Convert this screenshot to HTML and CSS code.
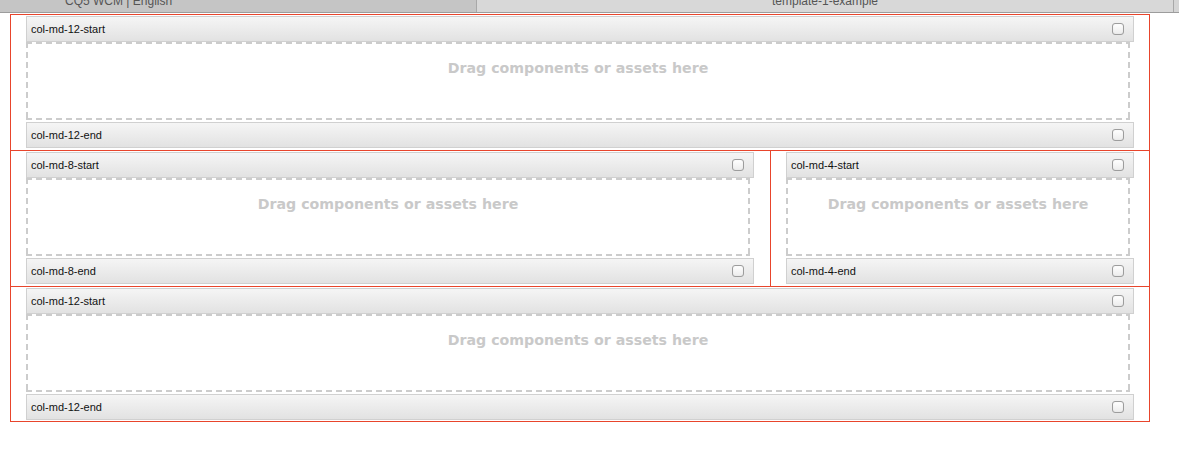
FILE: index.html
```html
<!DOCTYPE html>
<html>
<head>
<meta charset="utf-8">
<link rel="stylesheet" href="styles.css">
</head>
<body>
<div class="topbar">
  <div class="tab tab-left"><div class="tab-text">CQ5 WCM | English</div></div>
  <div class="tab tab-right"><div class="tab-text">template-1-example</div></div>
</div>
<div class="page">
  <div class="row">
    <div class="col col-full">
      <div class="bar"><span class="label">col-md-12-start</span><span class="check"></span></div>
      <div class="drop">Drag components or assets here</div>
      <div class="bar bar-end"><span class="label">col-md-12-end</span><span class="check"></span></div>
    </div>
  </div>
  <div class="row row-split">
    <div class="col col-8">
      <div class="bar"><span class="label">col-md-8-start</span><span class="check"></span></div>
      <div class="drop">Drag components or assets here</div>
      <div class="bar bar-end"><span class="label">col-md-8-end</span><span class="check"></span></div>
    </div>
    <div class="col col-4">
      <div class="bar"><span class="label">col-md-4-start</span><span class="check"></span></div>
      <div class="drop">Drag components or assets here</div>
      <div class="bar bar-end"><span class="label">col-md-4-end</span><span class="check"></span></div>
    </div>
  </div>
  <div class="row row-last">
    <div class="col col-full">
      <div class="bar"><span class="label">col-md-12-start</span><span class="check"></span></div>
      <div class="drop">Drag components or assets here</div>
      <div class="bar bar-end"><span class="label">col-md-12-end</span><span class="check"></span></div>
    </div>
  </div>
</div>
</body>
</html>
```

FILE: styles.css
```css
* { box-sizing: border-box; }

html, body {
  margin: 0;
  padding: 0;
  background: #ffffff;
}

body {
  font-family: "Liberation Sans", Arial, sans-serif;
}

.topbar {
  display: flex;
  height: 13px;
  background: #d5d5d5;
  border-bottom: 1px solid #9c9c9c;
  overflow: hidden;
}

.tab {
  height: 12px;
  overflow: hidden;
  font-size: 12px;
  color: #555555;
}

.tab-text {
  margin-top: -6px;
  line-height: 14px;
  white-space: nowrap;
}

.tab-left {
  width: 477px;
  background: #c5c5c5;
  border-right: 1px solid #a8a8a8;
  padding-left: 65px;
}

.tab-right {
  width: 697px;
  background: #d8d8d8;
  border-right: 1px solid #a8a8a8;
  text-align: center;
}

.page {
  margin: 1px 0 0 10px;
  width: 1140px;
  border: 1px solid #e8452c;
}

.row {
  display: flex;
  padding: 1px 0 2px;
}

.row + .row {
  border-top: 1px solid #e8452c;
}

.row-last {
  padding-bottom: 1px;
}

.col {
  display: flex;
  flex-direction: column;
}

.col-full {
  flex: 1;
  padding: 0 15px;
}

.col-8 {
  width: 760px;
  padding: 0 16px 0 15px;
  border-right: 1px solid #e8452c;
  margin-top: -1px;
  margin-bottom: -2px;
  padding-top: 1px;
  padding-bottom: 2px;
}

.col-4 {
  flex: 1;
  padding: 0 15px;
}

.bar {
  display: flex;
  align-items: center;
  justify-content: space-between;
  height: 26px;
  padding: 0 9px 0 4px;
  background: linear-gradient(to bottom, #f5f5f5 0%, #e2e2e2 100%);
  border: 1px solid #d0d0d0;
}

.bar-end {
  margin-top: 2px;
}

.label {
  font-size: 11px;
  color: #111111;
  line-height: 14px;
}

.check {
  width: 12px;
  height: 12px;
  border: 1px solid #9d9d9d;
  border-radius: 3px;
  background: linear-gradient(to bottom, #ffffff 0%, #ececec 100%);
  box-shadow: inset 0 0 1px rgba(0, 0, 0, 0.15);
}

.drop {
  height: 78px;
  margin-right: 4px;
  padding-top: 18px;
  text-align: center;
  font-family: "DejaVu Sans", Verdana, sans-serif;
  font-weight: bold;
  font-size: 14.2px;
  line-height: 17px;
  color: #c9c9c9;
  background:
    linear-gradient(to right, #cccccc 6px, transparent 6px) left top / 10px 2px repeat-x,
    linear-gradient(to right, #cccccc 6px, transparent 6px) left bottom / 10px 2px repeat-x,
    linear-gradient(to bottom, #cccccc 6px, transparent 6px) left top / 2px 10px repeat-y,
    linear-gradient(to bottom, #cccccc 6px, transparent 6px) right top / 2px 10px repeat-y;
}
```
